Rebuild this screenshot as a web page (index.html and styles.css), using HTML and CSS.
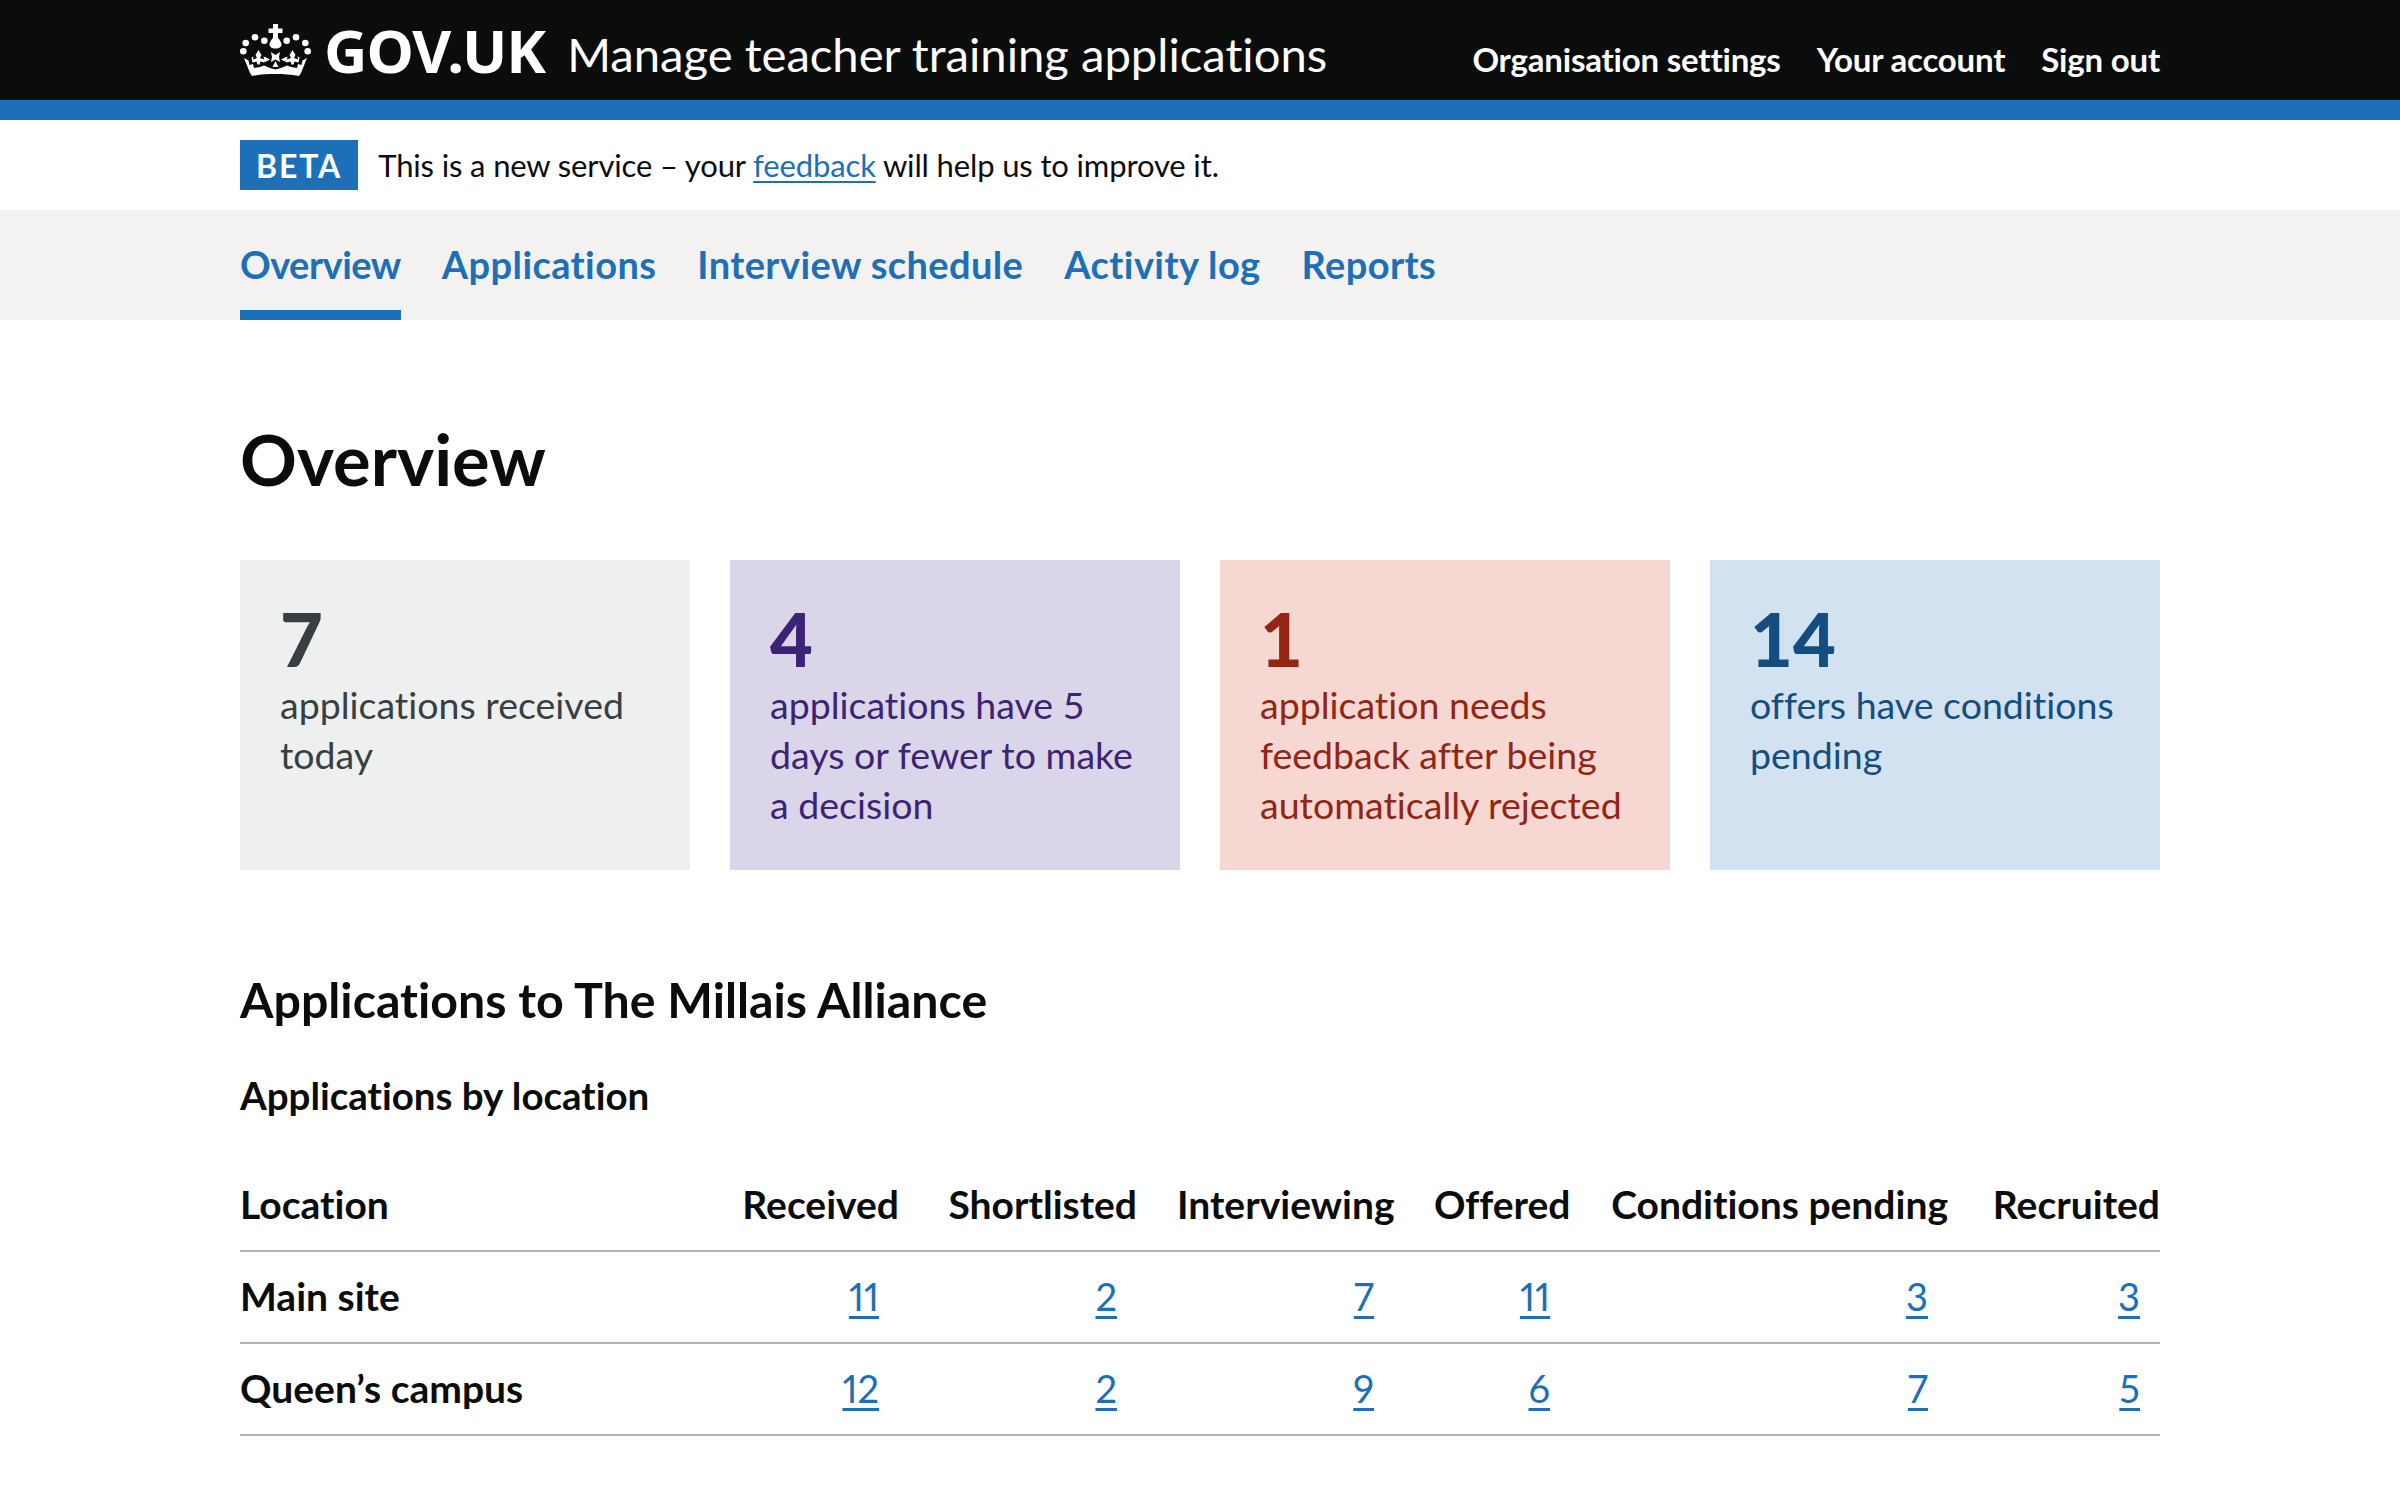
FILE: index.html
```html
<!DOCTYPE html>
<html lang="en">
<head>
    <meta charset="UTF-8">
    <title>Overview - Manage teacher training applications</title>
    <link rel="stylesheet" href="styles.css">
</head>
<body>
    <header class="header">
        <div class="container header-inner">
            <a class="logo" href="#">
                <svg class="crown" viewBox="0 0 71 52" aria-hidden="true">
                    <g fill="#fff">
                        <circle cx="5.700" cy="19" r="3.300"/><circle cx="15" cy="13.300" r="3.300"/><circle cx="24.300" cy="16.700" r="3.300"/>
                        <circle cx="46.700" cy="16.700" r="3.300"/><circle cx="56" cy="13.300" r="3.300"/><circle cx="65.300" cy="19" r="3.300"/>
                        <circle cx="3.300" cy="27.300" r="3.300"/><circle cx="67.700" cy="27.300" r="3.300"/>
                        <path d="M33 0h5v4.500h4.500v4.500H38v5c2.500 2.500 3.500 5 3.500 6.500 0 2.500-2.500 4-6 4s-6-1.500-6-4c0-1.500 1-4 3.500-6.500V9h-4.500V4.500H33z"/>
                        <path d="M31 28l4.500 3 4.500-3-1 5 1 5-4.500-2.500-4.500 2.500 1-5zM25 33l5 2.500-5 2.500zM46 33l-5 2.500 5 2.500zM35.500 37l3 6h-6z"/>
                        <path d="M18.500 26l3 5-1.500 3 4 1.500-.5-3 2 1-1 5-4-1-1 3h-2l-1-3-4 1-1-5 2-1-.5 3 4-1.500-1.500-3z"/>
                        <path d="M52.500 26l3 5-1.500 3 4 1.500-.5-3 2 1-1 5-4-1-1 3h-2l-1-3-4 1-1-5 2-1-.5 3 4-1.500-1.500-3z"/>
                        <path d="M4 34l4.500 2.500 1 4.500 3.500-1 1 4 6-1 4-1.500 6 2.500 5.500 1.500 5.500-1.500 6-2.500 4 1.500 6 1 1-4 3.500 1 1-4.500L67 34l-6 15 -2 3c-8-1.500-15.500-2-23.500-2s-15.500.5-23.500 2l-2-3z"/>
                    </g>
                </svg>
                <span class="logo-text">GOV.UK</span>
            </a>
            <a class="service-name" href="#">Manage teacher training applications</a>
            <nav class="header-nav">
                <a href="#">Organisation settings</a>
                <a href="#">Your account</a>
                <a href="#">Sign out</a>
            </nav>
        </div>
    </header>

    <div class="container phase-banner">
        <strong class="phase-tag">BETA</strong>
        <span>This is a new service – your <a href="#">feedback</a> will help us to improve it.</span>
    </div>

    <nav class="primary-nav">
        <div class="container primary-nav-inner">
            <a class="current" href="#">Overview</a>
            <a href="#">Applications</a>
            <a href="#">Interview schedule</a>
            <a href="#">Activity log</a>
            <a href="#">Reports</a>
        </div>
    </nav>

    <main class="container main">
        <h1>Overview</h1>

        <div class="cards">
            <div class="card card-grey">
                <div class="card-count">7</div>
                <div class="card-label">applications received today</div>
            </div>
            <div class="card card-purple">
                <div class="card-count">4</div>
                <div class="card-label">applications have 5 days or fewer to make a decision</div>
            </div>
            <div class="card card-red">
                <div class="card-count">1</div>
                <div class="card-label">application needs feedback after being automatically rejected</div>
            </div>
            <div class="card card-blue">
                <div class="card-count">14</div>
                <div class="card-label">offers have conditions pending</div>
            </div>
        </div>

        <h2>Applications to The Millais Alliance</h2>
        <h3>Applications by location</h3>

        <table class="table">
            <colgroup>
                <col class="col-location">
                <col class="col-received">
                <col class="col-shortlisted">
                <col class="col-interviewing">
                <col class="col-offered">
                <col class="col-conditions">
                <col class="col-recruited">
            </colgroup>
            <thead>
                <tr>
                    <th>Location</th>
                    <th class="num">Received</th>
                    <th class="num">Shortlisted</th>
                    <th class="num">Interviewing</th>
                    <th class="num">Offered</th>
                    <th class="num">Conditions pending</th>
                    <th class="num">Recruited</th>
                </tr>
            </thead>
            <tbody>
                <tr>
                    <th>Main site</th>
                    <td class="num"><a href="#">11</a></td>
                    <td class="num"><a href="#">2</a></td>
                    <td class="num"><a href="#">7</a></td>
                    <td class="num"><a href="#">11</a></td>
                    <td class="num"><a href="#">3</a></td>
                    <td class="num"><a href="#">3</a></td>
                </tr>
                <tr>
                    <th>Queen’s campus</th>
                    <td class="num"><a href="#">12</a></td>
                    <td class="num"><a href="#">2</a></td>
                    <td class="num"><a href="#">9</a></td>
                    <td class="num"><a href="#">6</a></td>
                    <td class="num"><a href="#">7</a></td>
                    <td class="num"><a href="#">5</a></td>
                </tr>
            </tbody>
        </table>
    </main>
</body>
</html>
```

FILE: styles.css
```css
* {
    box-sizing: border-box;
}
body {
    margin: 0;
    font-family: Lato, Arial, sans-serif;
    font-variant-ligatures: none;
    color: #0b0c0c;
    background: #fff;
}
a {
    color: #1d70b8;
}
.container {
    width: 1920px;
    margin: 0 auto;
}

/* header */
.header {
    height: 120px;
    background: #0b0c0c;
    border-bottom: 20px solid #1d70b8;
}
.header-inner {
    display: flex;
    align-items: flex-start;
    height: 100px;
}
.header a {
    color: #fff;
    text-decoration: none;
}
.logo {
    display: flex;
    align-items: center;
    height: 100px;
    margin-right: 22px;
}
.crown {
    width: 71px;
    height: 52px;
    margin-right: 13px;
}
.logo-text {
    font-family: "Noto Sans", Arial, sans-serif;
    font-size: 60px;
    font-weight: 700;
    line-height: 100px;
    letter-spacing: -1px;
}
.service-name {
    font-size: 47.200px;
    line-height: 108px;
}
.header-nav {
    display: flex;
    gap: 36px;
    margin-left: auto;
    font-size: 33px;
    font-weight: 700;
    line-height: 118px;
    letter-spacing: -0.2px;
}

/* phase banner */
.phase-banner {
    display: flex;
    align-items: center;
    height: 90px;
    font-size: 31px;
    letter-spacing: -0.14px;
}
.phase-banner a {
    text-decoration-thickness: 2px;
    text-underline-offset: 4px;
}
.phase-tag {
    display: block;
    height: 50px;
    margin-right: 20px;
    padding: 0 16px;
    background: #1d70b8;
    color: #fff;
    font-size: 32px;
    line-height: 52px;
    letter-spacing: 1.900px;
}

/* primary navigation */
.primary-nav {
    height: 110px;
    background: #f3f2f1;
}
.primary-nav-inner {
    display: flex;
    gap: 41px;
    height: 110px;
}
.primary-nav a {
    font-size: 38px;
    font-weight: 700;
    line-height: 108px;
    letter-spacing: 0.4px;
    text-decoration: none;
}
.primary-nav a.current {
    border-bottom: 10px solid #1d70b8;
    letter-spacing: -0.5px;
}

/* main */
.main {
    padding-top: 99px;
}
h1 {
    margin: 0 0 61px;
    font-size: 70.500px;
    font-weight: 700;
    line-height: 80px;
}
h2 {
    margin: 99px 0 41px;
    font-size: 48.300px;
    font-weight: 700;
    line-height: 60px;
}
h3 {
    margin: 0 0 40px;
    font-size: 38.500px;
    font-weight: 700;
    line-height: 50px;
}

/* cards */
.cards {
    display: grid;
    grid-template-columns: repeat(4, 450px);
    gap: 40px;
}
.card {
    height: 310px;
    padding: 39px 40px;
}
.card-count {
    margin-bottom: 1px;
    font-size: 74px;
    font-weight: 900;
    line-height: 80px;
}
.card-label {
    font-size: 37.500px;
    line-height: 50px;
}
.card-grey {
    background: #eeefef;
    color: #383f43;
}
.card-purple {
    background: #dbd5e9;
    color: #3d2375;
}
.card-red {
    background: #f6d7d2;
    color: #942514;
}
.card-blue {
    background: #d2e2f1;
    color: #144e81;
}

/* table */
.table {
    width: 100%;
    margin-top: 29px;
    border-collapse: collapse;
    table-layout: fixed;
    font-size: 38px;
    line-height: 50px;
}
.table th,
.table td {
    padding: 19px 40px 21px 0;
    border-bottom: 2px solid #b1b4b6;
    font-weight: 400;
    text-align: left;
    white-space: nowrap;
}
.table th {
    font-size: 39px;
    font-weight: 700;
}
.table th.num {
    text-align: right;
}
.table td.num {
    padding-right: 60px;
    text-align: right;
    font-feature-settings: "pnum";
}
.table td a {
    text-decoration-thickness: 3px;
    text-underline-offset: 5px;
}
.table tr > :last-child {
    padding-right: 0;
}
.table td.num:last-child {
    padding-right: 20px;
}
.col-location { width: 500px; }
.col-received { width: 199px; }
.col-shortlisted { width: 238px; }
.col-interviewing { width: 257px; }
.col-offered { width: 176px; }
.col-conditions { width: 378px; }
.col-recruited { width: 172px; }
```
